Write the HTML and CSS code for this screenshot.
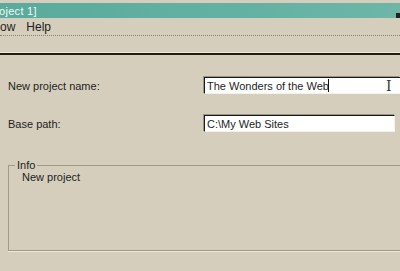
FILE: index.html
```html
<!DOCTYPE html>
<html lang="en">
<head>
    <meta charset="UTF-8">
    <title>New Project</title>
    <link rel="stylesheet" href="styles.css">
</head>
<body>

<div class="window">
    <div class="titlebar">
        <span class="title">oject 1]</span>
        <span class="title-btn"></span>
    </div>

    <div class="menubar">
        <span class="menu-item">ow</span>
        <span class="menu-item">Help</span>
    </div>

    <div class="toolbar"></div>

    <div class="form">
        <div class="row">
            <label for="project-name">New project name:</label>
            <div class="field wide">
                <input type="text" id="project-name" value="The Wonders of the Web">
                <span class="caret"></span>
                <span class="ibeam">I</span>
            </div>
        </div>
        <div class="row">
            <label for="base-path">Base path:</label>
            <div class="field">
                <input type="text" id="base-path" value="C:\My Web Sites">
            </div>
        </div>

        <fieldset class="info">
            <legend>Info</legend>
            <p>New project</p>
        </fieldset>
    </div>
</div>

</body>
</html>
```

FILE: styles.css
```css
body {
    margin: 0;
    padding: 0;
    background-color: #d5cebc;
    font-family: Arial, "Liberation Sans", sans-serif;
    font-size: 11px;
    color: #1e1e1e;
    overflow: hidden;
}

.window {
    width: 400px;
    height: 271px;
    overflow: hidden;
}

.titlebar {
    margin-top: 3px;
    height: 15px;
    display: flex;
    align-items: center;
    justify-content: space-between;
    background: linear-gradient(to right, #5aab9c, #63b1a2 60%, #6db6a8);
}

.title {
    color: #f4f8f6;
    font-size: 11px;
    letter-spacing: 0.3px;
    margin-left: -1px;
}

.title-btn {
    align-self: flex-end;
    width: 4px;
    height: 5px;
    background-color: #222;
}

.menubar {
    height: 17px;
    display: flex;
    align-items: center;
    gap: 11px;
    border-bottom: 1px dotted #8a8478;
}

.menu-item {
    font-size: 12px;
}

.toolbar {
    height: 16px;
    border-bottom: 1px solid #ece8dc;
    box-shadow: 0 2px 0 #241a0e;
    margin-bottom: 2px;
}

.form {
    padding: 0 0 0 8px;
}

.row {
    display: flex;
    align-items: center;
    height: 17px;
}

.row:first-child {
    margin-top: 24px;
}

.row + .row {
    margin-top: 21px;
}

label {
    flex-shrink: 0;
    width: 196px;
    font-size: 11px;
}

.field {
    position: relative;
    width: 191px;
    height: 17px;
}

.field.wide {
    width: 196px;
}

.field.wide input[type="text"] {
    border-right: none;
}

input[type="text"] {
    box-sizing: border-box;
    width: 100%;
    height: 17px;
    margin: 0;
    padding: 0 2px;
    border: none;
    border-top: 1px solid #1a1a1a;
    border-left: 1px solid #1a1a1a;
    border-right: 1px solid #f4f2ea;
    border-bottom: 1px solid #f4f2ea;
    box-shadow: -1px -1px 0 #9a9484;
    background-color: #fff;
    font-family: Arial, "Liberation Sans", sans-serif;
    font-size: 11px;
    color: #1e1e1e;
    outline: none;
}

.caret {
    position: absolute;
    left: 124px;
    top: 2px;
    width: 1px;
    height: 13px;
    background-color: #111;
}

.ibeam {
    position: absolute;
    left: 182px;
    top: 1px;
    font-family: "DejaVu Serif", serif;
    font-size: 14px;
    color: #333;
}

.info {
    box-sizing: border-box;
    margin: 27px 0 0 0;
    padding: 0 0 0 13px;
    height: 92px;
    width: 392px;
    border: 1px solid #a09a8a;
    border-right: none;
    box-shadow: 0 1px 0 #ece8dc;
}

.info legend {
    padding: 0 2px;
    margin-left: -7px;
    font-size: 11px;
}

.info p {
    margin: 0;
}
```
